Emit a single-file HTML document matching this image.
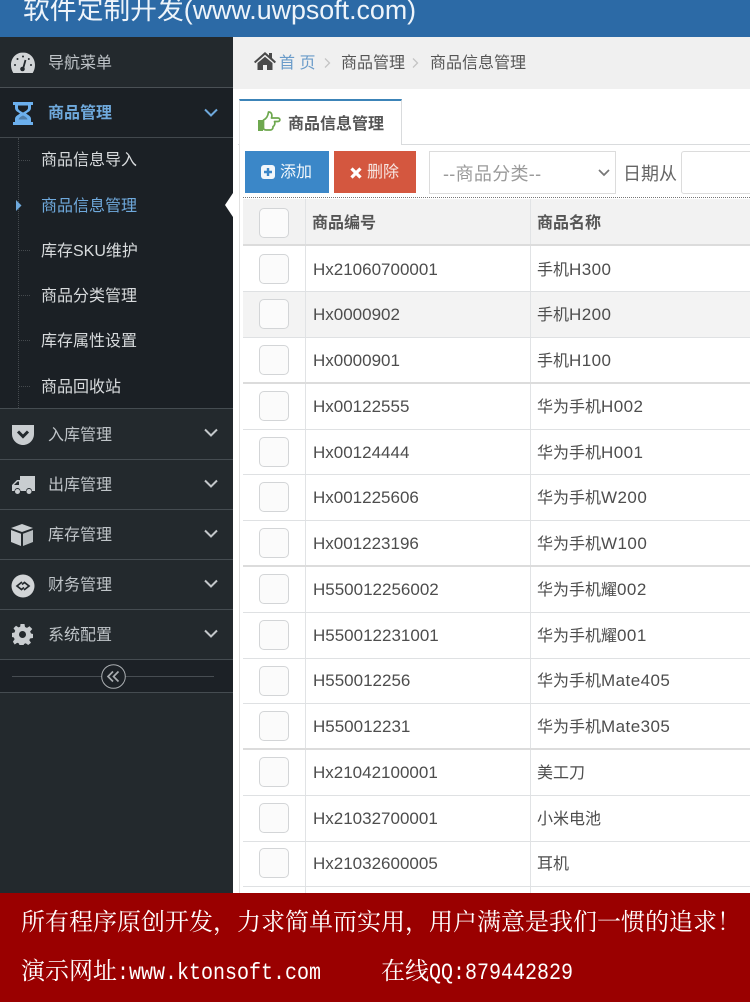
<!DOCTYPE html>
<html lang="zh-CN"><head><meta charset="utf-8"><style>
*{box-sizing:border-box}
html,body{margin:0;padding:0}
body{width:750px;height:1002px;position:relative;overflow:hidden;background:#fff;font-family:"Liberation Sans","Noto Sans CJK SC",sans-serif;font-size:16px;color:#444}
.a{position:absolute;white-space:nowrap}
.top{left:0;top:0;width:750px;height:37px;background:#2c6aa6}
.top span{position:absolute;left:23px;top:-9px;font-size:26.800px;line-height:38px;color:#eef4fa;white-space:nowrap}
.side{left:0;top:37px;width:233px;height:856px;background:#23292d}
.nav{position:absolute;left:0;width:233px;height:50px;border-bottom:1px solid #454c51;background:#23292d;color:#bfc4c8}
.nav .t{position:absolute;left:48px;top:1px;line-height:49px;font-size:16px;white-space:nowrap}
.nav svg.ic{position:absolute;left:10px;top:12px}
.nav svg.ch{position:absolute;left:204px;top:19px}
.sub{position:absolute;left:41px;font-size:16px;line-height:22px;color:#d8dbdd;white-space:nowrap}
.dash{position:absolute;left:19px;width:11px;height:0;border-top:1px dotted #454a4e}
.row{position:absolute;left:243px;width:507px;background:#fff;border-bottom:1px solid #dfe1e3}
.row i{position:absolute;left:62px;top:0;bottom:0;border-left:1px solid #e1e3e5}
.row b{position:absolute;left:287px;top:0;bottom:0;border-left:1px solid #e1e3e5}
.cb{position:absolute;left:16px;width:30px;height:30px;border:1px solid #d3d5d7;border-radius:5px;background:#fbfbfb}
.c1,.c2{position:absolute;font-size:16px;line-height:22px;margin-top:2px;color:#4d4d4d;white-space:nowrap;font-weight:400}
.c1{left:70px;font-size:17px;margin-top:1px}.c2{left:294px}
.c2:has(em){margin-top:1px}
.c2 em{font-style:normal;font-size:17px;letter-spacing:.45px}
.h{margin-top:0;font-size:16px;font-weight:700;color:#555}
.foot{left:0;top:893px;width:750px;height:109px;background:#9a0000;color:#fff;font-family:"Liberation Serif","Noto Serif CJK SC",serif}
.foot em{font-style:normal;display:inline-block;font-family:"Liberation Mono",monospace;font-size:20px;transform:scaleY(1.15);transform-origin:50% 60%}
</style></head><body>

<div class="a top"><span>软件定制开发(www.uwpsoft.com)</span></div>

<div class="a side"></div>
<div class="nav" style="top:37px;height:51px;border-bottom-color:#4a5055"><span class="t" style="line-height:51px">导航菜单</span>
<svg class="ic" style="top:15px;left:11px" width="24" height="22" viewBox="0 0 24 22"><path d="M12 0.500C5 0.500 0 6 0 13c0 3 .8 5.500 2.300 8h19.400c1.500-2.500 2.300-5 2.300-8 0-7-5-12.500-12-12.500z" fill="#d2d5d7"/><path d="M12 17l2.500-9" stroke="#23292d" stroke-width="1.800"/><circle cx="11.500" cy="17" r="2.300" fill="#23292d"/><circle cx="4" cy="13" r="1" fill="#23292d"/><circle cx="6.500" cy="7" r="1" fill="#23292d"/><circle cx="12" cy="4.500" r="1" fill="#23292d"/><circle cx="17.800" cy="7" r="1" fill="#23292d"/><circle cx="20" cy="13" r="1" fill="#23292d"/></svg></div>

<div class="a" style="left:0;top:88px;width:233px;height:321px;background:#1b2025"></div>
<div class="a" style="left:0;top:137px;width:233px;height:1px;background:#42484d"></div>
<div class="a" style="left:0;top:408px;width:233px;height:1px;background:#454c51"></div>
<div class="a" style="left:0;top:88px;width:233px;height:49px;color:#6fa9dc">
<svg style="position:absolute;left:12px;top:14px" width="22" height="23" viewBox="0 0 22 23"><path d="M1 0h20v3h-2v3c0 3-3 4-5 5.500 2 1.500 5 2.500 5 5.500v3h2v3H1v-3h2v-3c0-3 3-4 5-5.500C6 10 3 9 3 6V3H1z" fill="#6cb0ee"/><path d="M6 3.500h10V6c0 2-3 3.500-5 4.500C9 9.500 6 8 6 6z" fill="#1b2025"/><path d="M11 13.500c-2 1-4 2-4.500 4h9c-.5-2-2.500-3-4.500-4z" fill="#1b2025" opacity=".35"/></svg>
<span class="a" style="left:48px;top:1px;line-height:49px;font-weight:700;font-size:16px">商品管理</span>
<svg style="position:absolute;left:204px;top:20px" width="14" height="9" viewBox="0 0 14 9"><path d="M1 1.500l6 6 6-6" fill="none" stroke="#6fa9dc" stroke-width="2"/></svg></div>

<div class="a" style="left:18px;top:138px;height:270px;width:0;border-left:1px dotted #454a4e"></div>
<div class="dash" style="top:160px"></div>
<div class="dash" style="top:250px"></div>
<div class="dash" style="top:295px"></div>
<div class="dash" style="top:340px"></div>
<div class="dash" style="top:386px"></div>
<div class="sub" style="top:150px">商品信息导入</div>
<div class="sub" style="top:196px;color:#6fa9dc">商品信息管理</div>
<div class="sub" style="top:241px">库存SKU维护</div>
<div class="sub" style="top:286px">商品分类管理</div>
<div class="sub" style="top:331px">库存属性设置</div>
<div class="sub" style="top:377px">商品回收站</div>
<svg class="a" style="left:16px;top:200px" width="6" height="11" viewBox="0 0 6 11"><path d="M0 0l5.500 5.500L0 11z" fill="#6fa9dc"/></svg>
<svg class="a" style="left:225px;top:193px" width="8" height="24" viewBox="0 0 8 24"><path d="M8 0v24L0 12z" fill="#fff"/></svg>

<div class="nav" style="top:409px;height:51px"><span class="t" style="line-height:51px">入库管理</span>
<svg class="ic" style="left:12px;top:16px" width="22" height="20" viewBox="0 0 22 20"><path d="M0 0h22v9c0 6-5 11-11 11S0 15 0 9z" fill="#c9cdd0"/><path d="M6 6.500l5 5 5-5" fill="none" stroke="#23292d" stroke-width="3"/></svg>
<svg class="ch" width="14" height="9" viewBox="0 0 14 9"><path d="M1 1.500l6 6 6-6" fill="none" stroke="#c3c7ca" stroke-width="2"/></svg></div>

<div class="nav" style="top:460px"><span class="t">出库管理</span>
<svg class="ic" style="left:12px;top:16px" width="23" height="19" viewBox="0 0 23 19"><path d="M8 0h15v15H20a3 3 0 0 0-6 0H8.500a3 3 0 0 0-6 0H0V9l5-5h3z" fill="#c9cdd0"/><path d="M2 9l3.500-3.500H7V9z" fill="#23292d"/><circle cx="5.500" cy="15.500" r="2.500" fill="#c9cdd0"/><circle cx="17" cy="15.500" r="2.500" fill="#c9cdd0"/></svg>
<svg class="ch" width="14" height="9" viewBox="0 0 14 9"><path d="M1 1.500l6 6 6-6" fill="none" stroke="#c3c7ca" stroke-width="2"/></svg></div>

<div class="nav" style="top:510px"><span class="t">库存管理</span>
<svg class="ic" style="left:11px;top:14px" width="22" height="22" viewBox="0 0 22 22"><path d="M11 0l11 4-11 4L0 4z" fill="#c9cdd0"/><path d="M0 6l10 3.800V22L0 18z" fill="#c9cdd0"/><path d="M22 6l-10 3.800V22l10-4z" fill="#c9cdd0" opacity=".9"/></svg>
<svg class="ch" width="14" height="9" viewBox="0 0 14 9"><path d="M1 1.500l6 6 6-6" fill="none" stroke="#c3c7ca" stroke-width="2"/></svg></div>

<div class="nav" style="top:560px"><span class="t">财务管理</span>
<svg class="ic" style="left:11px;top:14px" width="24" height="24" viewBox="0 0 24 24"><circle cx="12" cy="12" r="11.500" fill="#d2d5d7"/><path d="M11 8l-5 4 4.500 3.500 2.500-2M13 16l5-4-4.500-3.500-2.500 2" fill="none" stroke="#23292d" stroke-width="1.700"/></svg>
<svg class="ch" width="14" height="9" viewBox="0 0 14 9"><path d="M1 1.500l6 6 6-6" fill="none" stroke="#c3c7ca" stroke-width="2"/></svg></div>

<div class="nav" style="top:610px"><span class="t">系统配置</span>
<svg class="ic" style="left:12px;top:14px" width="21" height="21" viewBox="0 0 21 21"><path d="M8.500 0h4l.5 3 2 .9 2.500-1.700 2.800 2.800L18.100 7.500l.9 2 2 .5v4l-3 .5-.7 1.800 1.700 2.500-2.800 2.200-2.500-1.700-1.700.7-.5 1.500h-4l-.5-2-1.800-.7-2.500 1.700L.9 17.700l1.700-2.500-.7-1.700L0 13V9l2.500-.5.700-1.800L1.500 4.200 4 1.700l2.500 1.700 1.700-.7z" fill="#c9cdd0"/><circle cx="10.500" cy="10.500" r="3.500" fill="#23292d"/></svg>
<svg class="ch" width="14" height="9" viewBox="0 0 14 9"><path d="M1 1.500l6 6 6-6" fill="none" stroke="#c3c7ca" stroke-width="2"/></svg></div>

<div class="a" style="left:0;top:660px;width:233px;height:33px;background:#1c2126;border-bottom:1px solid #454c51"></div>
<div class="a" style="left:12px;top:676px;width:202px;height:1px;background:#474d52"></div>
<svg class="a" style="left:101px;top:664px" width="25" height="25" viewBox="0 0 25 25"><circle cx="12.500" cy="12.500" r="11.800" fill="#1c2126" stroke="#a9adb0" stroke-width="1"/><path d="M12 7.500l-5 5 5 5M17.500 7.500l-5 5 5 5" fill="none" stroke="#a9adb0" stroke-width="1.700"/></svg>

<div class="a" style="left:233px;top:37px;width:517px;height:856px;background:#fff"></div>
<div class="a" style="left:233px;top:37px;width:517px;height:52px;background:#f0f0f0"></div>
<svg class="a" style="left:254px;top:52px" width="22" height="18" viewBox="0 0 22 18"><path d="M11 0l4 3.500V1h3v5l4 3.800-1.300 1.400L11 2.800 1.300 11.200 0 9.800z" fill="#4a4a4a"/><path d="M3.500 11L11 4.800 18.500 11v7H13v-5H9v5H3.500z" fill="#4a4a4a"/></svg>
<div class="a" style="left:279px;top:53px;line-height:22px;color:#6a9bc9;letter-spacing:0">首 页</div>
<svg class="a" style="left:324px;top:58px" width="7" height="10" viewBox="0 0 7 10"><path d="M1 .5l4.500 4.500L1 9.500" fill="none" stroke="#c4c4c4" stroke-width="1.300"/></svg>
<div class="a" style="left:341px;top:53px;line-height:22px;color:#555">商品管理</div>
<svg class="a" style="left:412px;top:58px" width="7" height="10" viewBox="0 0 7 10"><path d="M1 .5l4.500 4.500L1 9.500" fill="none" stroke="#c4c4c4" stroke-width="1.300"/></svg>
<div class="a" style="left:430px;top:53px;line-height:22px;color:#555">商品信息管理</div>

<div class="a" style="left:233px;top:89px;width:6px;height:804px;background:#fff"></div>
<div class="a" style="left:238px;top:144px;width:512px;height:1px;background:#d9dbdd"></div>
<div class="a" style="left:239px;top:145px;width:1px;height:748px;background:#e1e1e1"></div>
<div class="a" style="left:239px;top:99px;width:163px;height:46px;background:#fff;border-top:2px solid #3c84b8;border-right:1px solid #d9dbdd;border-left:1px solid #e6e6e6"></div>
<svg class="a" style="left:257px;top:111px" width="24" height="21" viewBox="0 0 24 21"><path d="M1 9h5v11H1z" fill="#6ea84f"/><path d="M6.500 9c2.500-1 4.500-4 5-8 3 0 4 2.500 3 6H21c2.500 0 2.500 3.500 0 3.500h-3.500c.8 2.200 0 4.500-1.500 5 .2 2-1 3.500-2.500 3.500H9c-1 0-1.800-.5-2.500-1z" fill="#fff" stroke="#6ea84f" stroke-width="1.700" stroke-linejoin="round"/></svg>
<div class="a" style="left:288px;top:114px;line-height:22px;font-weight:700;color:#555">商品信息管理</div>

<div class="a" style="left:245px;top:151px;width:84px;height:42px;background:#3b87c8;color:#f2f7fb;line-height:44px;padding-left:35px">添加</div>
<svg class="a" style="left:261px;top:165px" width="14" height="14" viewBox="0 0 14 14"><rect width="14" height="14" rx="3" fill="#f2f7fb"/><path d="M7 3v8M3 7h8" stroke="#3b87c8" stroke-width="2.400"/></svg>
<div class="a" style="left:334px;top:151px;width:82px;height:42px;background:#d4573f;color:#f7e6e2;line-height:44px;padding-left:33px">删除</div>
<svg class="a" style="left:350px;top:167px" width="12" height="12" viewBox="0 0 12 12"><path d="M1.500 1.500l9 9M10.500 1.500l-9 9" stroke="#fff" stroke-width="3.200"/></svg>
<div class="a" style="left:429px;top:151px;width:187px;height:43px;background:#fff;border:1px solid #dcdcdc;line-height:44px;padding-left:13px;font-size:18px;letter-spacing:.3px;color:#9a9a9a">--商品分类--</div>
<svg class="a" style="left:598px;top:169px" width="12" height="8" viewBox="0 0 12 8"><path d="M1 1l5 5 5-5" fill="none" stroke="#777" stroke-width="1.700"/></svg>
<div class="a" style="left:623px;top:161px;line-height:26px;font-size:18px;color:#666">日期从</div>
<div class="a" style="left:681px;top:151px;width:80px;height:43px;background:#fff;border:1px solid #dcdcdc;border-radius:3px"></div>
<div class="a" style="left:243px;top:197px;width:507px;height:0;border-top:1px dotted #777"></div>

<div class="a" style="left:243px;top:199px;width:1px;height:694px;background:#e1e3e5"></div>

<div class="row" style="top:199px;height:47px;background:#f2f2f2;border-bottom:2px solid #dcdcdc"><i></i><b></b><span class="cb" style="top:9px"></span><span class="c1 h" style="top:14px;left:69px;margin-top:0">商品编号</span><span class="c2 h" style="top:14px;margin-top:0">商品名称</span></div>
<div class="row" style="top:246px;height:46px"><i></i><b></b><span class="cb" style="top:8px"></span><span class="c1" style="top:12px">Hx21060700001</span><span class="c2" style="top:12px">手机<em>H300</em></span></div>
<div class="row" style="top:292px;height:46px;background:#f3f3f3"><i></i><b></b><span class="cb" style="top:7px"></span><span class="c1" style="top:11px">Hx0000902</span><span class="c2" style="top:11px">手机<em>H200</em></span></div>
<div class="row" style="top:338px;height:46px;border-bottom:2px solid #dcdcdc"><i></i><b></b><span class="cb" style="top:7px"></span><span class="c1" style="top:11px">Hx0000901</span><span class="c2" style="top:11px">手机<em>H100</em></span></div>
<div class="row" style="top:384px;height:46px"><i></i><b></b><span class="cb" style="top:7px"></span><span class="c1" style="top:11px">Hx00122555</span><span class="c2" style="top:11px">华为手机<em>H002</em></span></div>
<div class="row" style="top:430px;height:45px"><i></i><b></b><span class="cb" style="top:7px"></span><span class="c1" style="top:11px">Hx00124444</span><span class="c2" style="top:11px">华为手机<em>H001</em></span></div>
<div class="row" style="top:475px;height:46px"><i></i><b></b><span class="cb" style="top:7px"></span><span class="c1" style="top:11px">Hx001225606</span><span class="c2" style="top:11px">华为手机<em>W200</em></span></div>
<div class="row" style="top:521px;height:46px;border-bottom:2px solid #dcdcdc"><i></i><b></b><span class="cb" style="top:7px"></span><span class="c1" style="top:11px">Hx001223196</span><span class="c2" style="top:11px">华为手机<em>W100</em></span></div>
<div class="row" style="top:567px;height:46px"><i></i><b></b><span class="cb" style="top:7px"></span><span class="c1" style="top:11px">H550012256002</span><span class="c2" style="top:11px">华为手机耀<em>002</em></span></div>
<div class="row" style="top:613px;height:46px"><i></i><b></b><span class="cb" style="top:7px"></span><span class="c1" style="top:11px">H550012231001</span><span class="c2" style="top:11px">华为手机耀<em>001</em></span></div>
<div class="row" style="top:659px;height:45px"><i></i><b></b><span class="cb" style="top:7px"></span><span class="c1" style="top:10px">H550012256</span><span class="c2" style="top:10px">华为手机<em>Mate405</em></span></div>
<div class="row" style="top:704px;height:46px;border-bottom:2px solid #dcdcdc"><i></i><b></b><span class="cb" style="top:7px"></span><span class="c1" style="top:11px">H550012231</span><span class="c2" style="top:11px">华为手机<em>Mate305</em></span></div>
<div class="row" style="top:750px;height:46px"><i></i><b></b><span class="cb" style="top:7px"></span><span class="c1" style="top:11px">Hx21042100001</span><span class="c2" style="top:11px">美工刀</span></div>
<div class="row" style="top:796px;height:46px"><i></i><b></b><span class="cb" style="top:7px"></span><span class="c1" style="top:11px">Hx21032700001</span><span class="c2" style="top:11px">小米电池</span></div>
<div class="row" style="top:842px;height:45px"><i></i><b></b><span class="cb" style="top:6px"></span><span class="c1" style="top:10px">Hx21032600005</span><span class="c2" style="top:10px">耳机</span></div>
<div class="row" style="top:887px;height:6px;border-bottom:0"><i></i><b></b></div>

<div class="a foot">
<div class="a" style="left:21px;top:14px;font-size:24px;line-height:32px">所有程序原创开发，力求简单而实用，用户满意是我们一惯的追求！</div>
<div class="a" style="left:21px;top:63px;font-size:24px;line-height:32px">演示网址<em>:www.ktonsoft.com</em></div>
<div class="a" style="left:381px;top:63px;font-size:24px;line-height:32px">在线<em>QQ:879442829</em></div>
</div>
</body></html>
